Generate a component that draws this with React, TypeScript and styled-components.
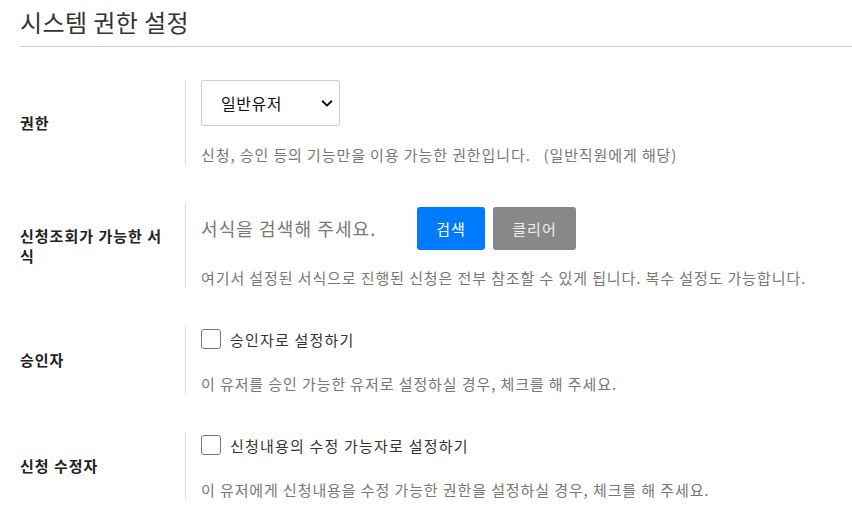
import React from "react";
import styled, { createGlobalStyle } from "styled-components";

const Global = createGlobalStyle`
  html, body { margin: 0; padding: 0; background: #fff; }
  body { font-family: "Noto Sans CJK KR", "Noto Sans", sans-serif; color: #222; }
`;

const Page = styled.div`
  padding: 0 0 0 20px;
  width: 852px;
  box-sizing: border-box;
`;

const Title = styled.h1`
  margin: 0;
  padding: 3px 0 6px;
  font-size: 24px;
  font-weight: 400;
  letter-spacing: 0.4px;
  line-height: 37px;
  color: #333;
  border-bottom: 1px solid #ccc;
`;

const Form = styled.div`
  display: flex;
  flex-direction: column;
  gap: 38px;
  margin-top: 33px;
`;

const Row = styled.div`
  display: grid;
  grid-template-columns: 165px 1fr;
`;

const Label = styled.div`
  display: flex;
  align-items: center;
  font-size: 15px;
  font-weight: 700;
  letter-spacing: 1px;
  line-height: 20px;
  color: #222;
  padding-right: 14px;
`;

const Content = styled.div`
  border-left: 1px solid #ddd;
  padding-left: 15px;
  display: flex;
  flex-direction: column;
`;

const Help = styled.p<{ $gap: number }>`
  margin: ${(p) => p.$gap}px 0 0;
  font-size: 15px;
  letter-spacing: 0.9px;
  line-height: 21px;
  color: #777;
  white-space: pre;
`;

const SelectBox = styled.div`
  width: 139px;
  height: 46px;
  box-sizing: border-box;
  border: 1px solid #ccc;
  border-radius: 3px;
  display: flex;
  align-items: center;
  justify-content: space-between;
  padding: 0 5px 0 19px;
  font-size: 16px;
  letter-spacing: 0.5px;
  color: #111;
`;

const SearchRow = styled.div`
  display: flex;
  align-items: center;
  height: 50px;
`;

const SearchInput = styled.input`
  width: 216px;
  border: none;
  outline: none;
  padding: 0;
  font-family: inherit;
  font-size: 18px;
  letter-spacing: 1.1px;
  color: #333;
  &::placeholder { color: #777; }
`;

const Button = styled.button<{ $variant: "primary" | "muted" }>`
  height: 43px;
  border: none;
  border-radius: 3px;
  font-family: inherit;
  font-size: 15px;
  letter-spacing: 1px;
  color: ${(p) => (p.$variant === "primary" ? "#fff" : "#eee")};
  background: ${(p) => (p.$variant === "primary" ? "#007bff" : "#888")};
  width: ${(p) => (p.$variant === "primary" ? "68px" : "83px")};
  margin-right: 8px;
  padding: 0;
  cursor: pointer;
`;

const CheckRow = styled.label`
  display: flex;
  align-items: center;
  gap: 9px;
  height: 26px;
  font-size: 15px;
  letter-spacing: 1.2px;
  color: #333;
`;

const Box = styled.span`
  width: 20px;
  height: 20px;
  box-sizing: border-box;
  border: 1px solid #777;
  border-radius: 3px;
  background: #fff;
`;

const Chevron = () => (
  <svg width="14" height="14" viewBox="0 0 16 16">
    <path d="M3 6l5 5 5-5" fill="none" stroke="#111" strokeWidth="2.2" strokeLinecap="round" strokeLinejoin="round" />
  </svg>
);

export default function App() {
  return (
    <Page>
      <Global />
      <Title>시스템 권한 설정</Title>
      <Form>
        <Row>
          <Label>권한</Label>
          <Content>
            <SelectBox>
              <span>일반유저</span>
              <Chevron />
            </SelectBox>
            <Help $gap={18}>신청, 승인 등의 기능만을 이용 가능한 권한입니다.   (일반직원에게 해당)</Help>
          </Content>
        </Row>
        <Row>
          <Label>신청조회가 가능한 서식</Label>
          <Content>
            <SearchRow>
              <SearchInput placeholder="서식을 검색해 주세요." />
              <Button $variant="primary">검색</Button>
              <Button $variant="muted">클리어</Button>
            </SearchRow>
            <Help $gap={14}>여기서 설정된 서식으로 진행된 신청은 전부 참조할 수 있게 됩니다. 복수 설정도 가능합니다.</Help>
          </Content>
        </Row>
        <Row>
          <Label>승인자</Label>
          <Content>
            <CheckRow>
              <Box />
              승인자로 설정하기
            </CheckRow>
            <Help $gap={21}>이 유저를 승인 가능한 유저로 설정하실 경우, 체크를 해 주세요.</Help>
          </Content>
        </Row>
        <Row>
          <Label>신청 수정자</Label>
          <Content>
            <CheckRow>
              <Box />
              신청내용의 수정 가능자로 설정하기
            </CheckRow>
            <Help $gap={21}>이 유저에게 신청내용을 수정 가능한 권한을 설정하실 경우, 체크를 해 주세요.</Help>
          </Content>
        </Row>
      </Form>
    </Page>
  );
}
